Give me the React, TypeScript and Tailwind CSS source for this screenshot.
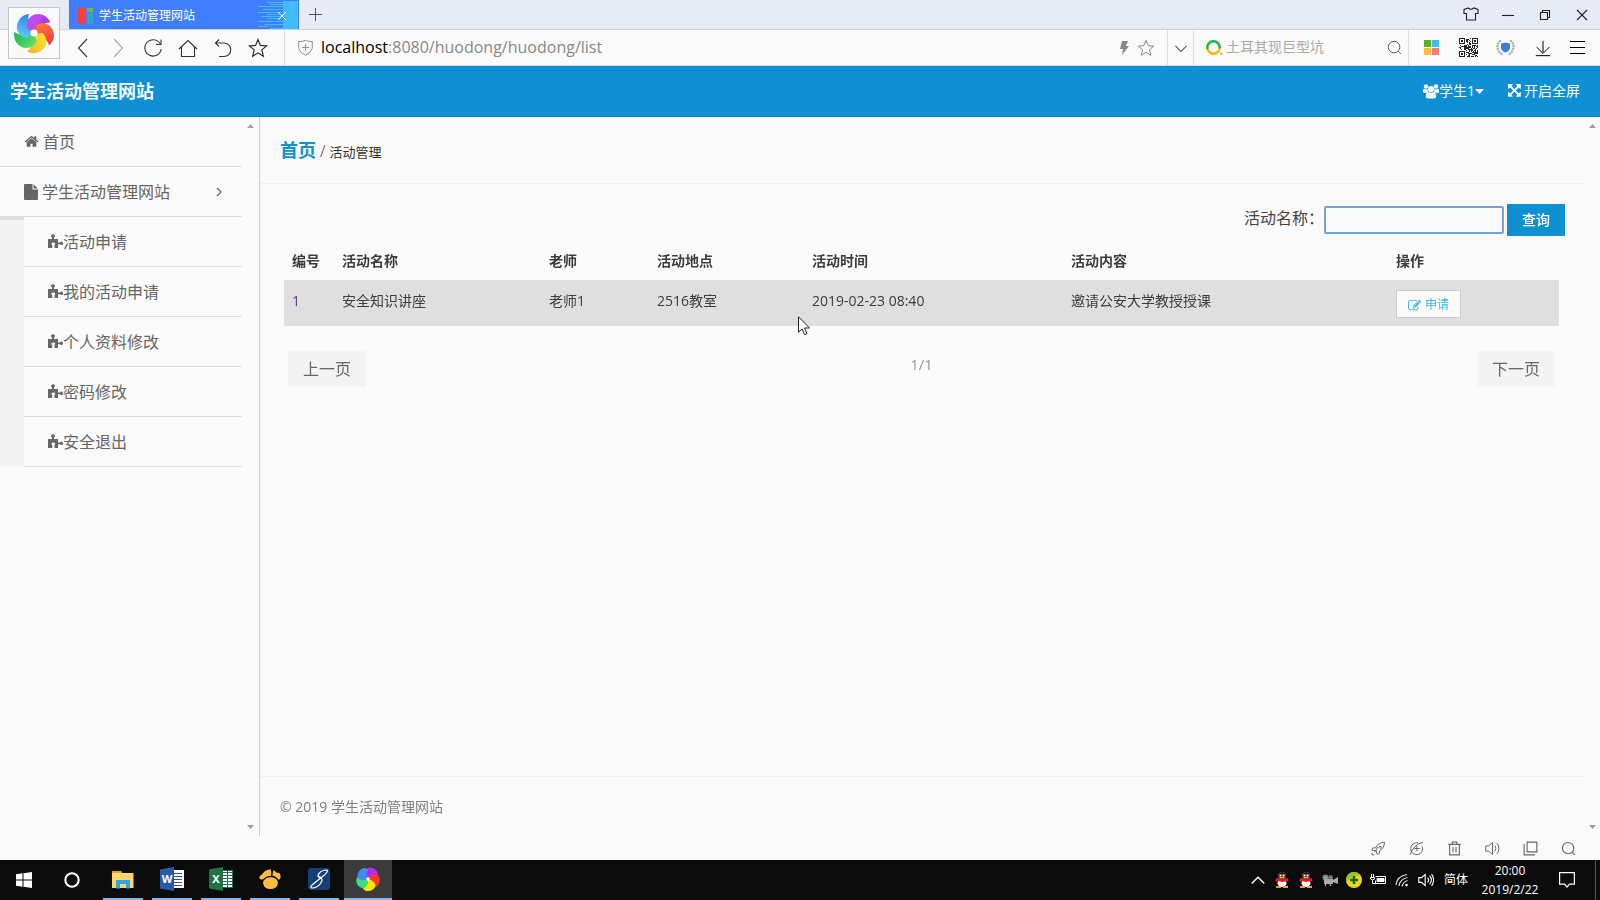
import { useState } from 'react'
import type { ReactNode } from 'react'

type IconProps = { className?: string }

const PATHS = {
  home: 'M1472 992v480q0 26-19 45t-45 19h-384v-384h-256v384h-384q-26 0-45-19t-19-45v-480q0-1 .5-3t.5-3l575-474 575 474q1 2 1 6zm223-69l-62 74q-8 9-21 11h-3q-13 0-21-7l-692-577-692 577q-12 8-24 7-13-2-21-11l-62-74q-8-10-7-23.5t11-21.5l719-599q32-26 76-26t76 26l244 204v-195q0-14 9-23t23-9h192q14 0 23 9t9 23v408l219 182q10 8 11 21.5t-7 23.5z',
  expand: 'M1283 413l-355 355 355 355 144-144q29-31 70-14 39 17 39 59v448q0 26-19 45t-45 19h-448q-42 0-59-40-17-39 14-69l144-144-355-355-355 355 144 144q31 30 14 69-17 40-59 40h-448q-26 0-45-19t-19-45v-448q0-42 40-59 39-17 69 14l144 144 355-355-355-355-144 144q-19 19-45 19-12 0-24-5-40-17-40-59v-448q0-26 19-45t45-19h448q42 0 59 40 17 39-14 69l-144 144 355 355 355-355-144-144q-31-30-14-69 17-40 59-40h448q26 0 45 19t19 45v448q0 42-39 59-13 5-25 5-26 0-45-19z',
  edit: 'M888 1184l116-116-152-152-116 116v56h96v96h56zm440-720q-16-16-33 1l-350 350q-17 17-1 33t33-1l350-350q17-17 1-33zm80 594v190q0 119-84.5 203.5t-203.5 84.5h-832q-119 0-203.5-84.5t-84.5-203.5v-832q0-119 84.5-203.5t203.5-84.5h832q63 0 117 25 15 7 18 23 3 17-9 29l-49 49q-14 14-32 8-23-6-45-6h-832q-66 0-113 47t-47 113v832q0 66 47 113t113 47h832q66 0 113-47t47-113v-126q0-13 9-22l64-64q15-15 35-7t20 29zm-96-738l288 288-672 672h-288v-288zm444 132l-92 92-288-288 92-92q28-28 68-28t68 28l152 152q28 28 28 68t-28 68z',
}

function Glyph({ name, className }: { name: keyof typeof PATHS; className?: string }) {
  return (
    <svg viewBox="0 0 1792 1792" fill="currentColor" className={className} aria-hidden="true">
      <path d={PATHS[name]} />
    </svg>
  )
}

function Line({ children, size = 20, className = '' }: { children: ReactNode; size?: number; className?: string }) {
  return (
    <svg
      width={size}
      height={size}
      viewBox="0 0 20 20"
      fill="none"
      stroke="currentColor"
      strokeWidth="1.1"
      className={className}
      aria-hidden="true"
    >
      {children}
    </svg>
  )
}

function PuzzleIcon({ className }: IconProps) {
  return (
    <svg viewBox="0 0 15 15" fill="currentColor" className={className} aria-hidden="true">
      <path d="M0 5h4V3.500Q3 2.900 3 1.800Q3 .3 5 .3T7 1.800Q7 2.900 6 3.500V5h4v3.500h2q.5-1 1.500-1Q15 7.500 15 9.400T13.500 11q-1 0-1.500-.7h-2V14H6.500v-3q.7-.5.700-1.200Q7.200 8.500 5.300 8.500T3.400 9.800q0 .7.800 1.200v3H0z" />
    </svg>
  )
}

function UsersIcon({ className }: IconProps) {
  return (
    <svg viewBox="0 0 16 15" fill="currentColor" className={className} aria-hidden="true">
      <circle cx="3" cy="2.500" r="2.200" />
      <circle cx="13" cy="2.500" r="2.200" />
      <path d="M0 5.500Q1 4.500 2.500 5.300L5 5.500v2L3 9H1.500Q0 9 0 7.500zM16 5.500q-1-1-2.500-.2L11 5.500v2L13 9h1.500Q16 9 16 7.500z" />
      <circle cx="8" cy="5" r="3.100" />
      <path d="M5 7.800Q8 9.500 11 7.800Q13.200 8.500 13.200 12.500Q13.200 14.500 11 14.500H5Q2.800 14.500 2.800 12.500Q2.800 8.500 5 7.800z" />
    </svg>
  )
}

// five-petal swirl used by the browser logo
const PETALS = [
  ['purple', '#c94ff3', '#a935ea'],
  ['red', '#fb7a3c', '#fb3340'],
  ['yellow', '#fbe32f', '#f9b32c'],
  ['green', '#5fe070', '#17b750'],
  ['blue', '#63c4fb', '#2b86ea'],
] as const

function SwirlLogo() {
  return (
    <svg width="42" height="42" viewBox="-21 -21 42 42" aria-hidden="true">
      <defs>
        {PETALS.map(([id, from, to]) => (
          <linearGradient key={id} id={`petal-${id}`}>
            <stop offset="0" stopColor={from} />
            <stop offset="1" stopColor={to} />
          </linearGradient>
        ))}
      </defs>
      {PETALS.map(([id], i) => (
        <path
          key={id}
          d="M-1-2.500Q-5-3-7-5Q-8-12-3-16.500Q2-20 9-18Q14-16 16.500-10.500Q13-11 10-9Q5-6 2-1z"
          fill={`url(#petal-${id})`}
          transform={`rotate(${i * 72})`}
        />
      ))}
      {/* the first petal has to sit on top of the last one */}
      <path d="M-1-2.500Q-5-3-7-5Q-8-12-3-16.500Q2-20 9-18L3-8Q1-5 0-2z" fill="#c24af1" />
      <circle r="3.600" fill="#fff" />
    </svg>
  )
}

function PinwheelIcon() {
  const colors = ['#b22df0', '#f5382c', '#fbe509', '#3ddc84', '#3f8cf0']
  return (
    <svg width="24" height="24" viewBox="-12 -12 24 24" aria-hidden="true">
      {colors.map((color, i) => (
        <path
          key={color}
          d="M0 0Q-4-4-2.500-9.500Q3-14 9-8Q10.500-5 9-2.500Q4-5 0 0z"
          fill={color}
          transform={`rotate(${i * 72})`}
        />
      ))}
      <circle r="1.800" fill="#fff" />
    </svg>
  )
}

function QrIcon() {
  const cells: ReactNode[] = []
  let seed = 77
  for (let y = 0; y < 19; y++) {
    for (let x = 0; x < 19; x++) {
      seed = (seed * 1103515 + 12345) % 65521
      const finder = (x < 7 && y < 7) || (x > 11 && y < 7) || (x < 7 && y > 11)
      if (!finder && seed % 100 < 52) {
        cells.push(<rect key={`${x}-${y}`} x={x} y={y} width="1" height="1" />)
      }
    }
  }
  return (
    <svg width="19" height="19" viewBox="0 0 19 19" fill="#222" shapeRendering="crispEdges" aria-hidden="true">
      {cells}
      {[[0, 0], [13, 0], [0, 13]].map(([x, y]) => (
        <path key={`${x}-${y}`} fillRule="evenodd" d={`M${x} ${y}h6v6h-6zM${x + 1} ${y + 1}v4h4v-4zM${x + 2} ${y + 2}h2v2h-2z`} />
      ))}
    </svg>
  )
}

function StarShape() {
  return <path d="M10 1.500l2.400 5.900 6.200.5-4.800 4 1.600 6.300L10 14.800l-5.400 3.400 1.600-6.300-4.800-4 6.200-.5z" />
}

function SearchShape() {
  return (
    <>
      <circle cx="9.500" cy="9.500" r="6.800" />
      <path d="M14.500 14.500l3 3" />
    </>
  )
}

function TabStrip() {
  return (
    <div className="flex h-[30px] items-stretch border-b border-[#cfd2da] bg-[#e7ebf5] pl-[69px]">
      <div className="relative flex w-[230px] items-center bg-[#3f7efe] pt-0.5 pl-2 text-xs text-white">
        <svg width="16" height="16" viewBox="0 0 16 16" aria-hidden="true">
          <path d="M0 0h8v16H0z" fill="#fb3d40" />
          <path d="M10 0h6v4h-6z" fill="#6fba45" />
          <path d="M10 5h6v11h-6z" fill="#3a9fc4" />
        </svg>
        <span className="ml-1.5 flex-1">学生活动管理网站</span>
        <svg width="40" height="28" viewBox="0 0 40 28" className="absolute top-px right-px" aria-hidden="true">
          <path d="M25 0h15v28H25z" fill="#40bcfd" />
          <path
            d="M9 1.500h16M12 3.500h13M0 5.500h25M5 8.500h20M0 11.500h25M9 13.500h16M3 15.500h22M9 17.500h16M0 20.500h25M6 23.500h19M0 25.500h10M12 27.500h13"
            stroke="#40bcfd"
          />
        </svg>
        <button type="button" aria-label="关闭标签页" className="relative mr-2 p-1">
          <svg width="10" height="10" viewBox="0 0 10 10" stroke="#fff" aria-hidden="true">
            <path d="M1 1l8 8M9 1l-8 8" />
          </svg>
        </button>
      </div>
      <button type="button" aria-label="新标签页" className="w-8 pl-2.5 text-[#555]">
        <svg width="13" height="13" viewBox="0 0 13 13" stroke="currentColor" aria-hidden="true">
          <path d="M6.500 0v13M0 6.500h13" />
        </svg>
      </button>
      <div className="ml-auto flex text-[#222]">
        <WindowButton label="皮肤">
          <path d="M7 3L3 4.500v4h2.500V15h9V8.500H17v-4L13 3Q10 5.500 7 3z" />
        </WindowButton>
        <WindowButton label="最小化">
          <path d="M4 10.500h12" />
        </WindowButton>
        <WindowButton label="还原">
          <path d="M5.500 7.500h7v7h-7zM7.500 7.500v-2h7v7h-2" />
        </WindowButton>
        <WindowButton label="关闭">
          <path d="M5 5l10 10M15 5L5 15" />
        </WindowButton>
      </div>
    </div>
  )
}

function WindowButton({ label, children }: { label: string; children: ReactNode }) {
  return (
    <button type="button" aria-label={label} className="flex w-[37px] items-center justify-center">
      <Line>{children}</Line>
    </button>
  )
}

function ToolButton({ label, children, className = '' }: { label: string; children: ReactNode; className?: string }) {
  return (
    <button type="button" aria-label={label} className={`flex w-[35px] shrink-0 items-center justify-center ${className}`}>
      {children}
    </button>
  )
}

function Toolbar() {
  return (
    <div className="flex h-9 items-stretch border-b border-[#dcdcdc] bg-[#fafafa] text-[#333]">
      <div className="flex w-[285px] border-r border-[#dcdcdc] pl-[65px]">
        <ToolButton label="后退"><Line><path d="M14 1L5.500 10l8.500 9" /></Line></ToolButton>
        <ToolButton label="前进" className="text-[#aaa]"><Line><path d="M6 1l8.500 9L6 19" /></Line></ToolButton>
        <ToolButton label="刷新">
          <Line><path d="M17 5.500A8.200 8.200 0 1 0 18.200 11M18 1.500v5h-5" /></Line>
        </ToolButton>
        <ToolButton label="主页"><Line><path d="M1 11l9-8.500 9 8.500M3.500 9v9.500h13V9" /></Line></ToolButton>
        <ToolButton label="撤销"><Line><path d="M6 1.500L2.500 5 6 8.500M2.500 5H11a6.500 6.500 0 1 1 0 13.500H6" /></Line></ToolButton>
        <ToolButton label="收藏" className="text-[#222]"><Line><StarShape /></Line></ToolButton>
      </div>
      <div className="flex min-w-0 flex-1 items-center pl-3">
        <Line size={17} className="shrink-0 text-[#888]">
          <path d="M10 1.500Q14 3.500 18 3v8q-1 5-8 8-7-3-8-8V3q4 .5 8-1.500zM10 6v8M6 10h8" />
        </Line>
        <p className="ml-[7px] truncate pb-0.5 text-base text-[#888]">
          <span className="text-black">localhost</span>:8080/huodong/huodong/list
        </p>
        <div className="ml-auto flex items-center gap-1.5 pr-3 text-[#888]">
          <svg width="12" height="14" viewBox="0 0 12 14" fill="currentColor" aria-hidden="true">
            <path d="M3 0h6L7 5h3L3 14l1-6H1z" />
          </svg>
          <Line size={18}><StarShape /></Line>
        </div>
      </div>
      <button type="button" aria-label="展开地址" className="flex w-[27px] items-center justify-center border-x border-[#dcdcdc] text-[#555]">
        <Line size={14}><path d="M2 7l8 8 8-8" strokeWidth="1.500" /></Line>
      </button>
      <div className="flex w-[215px] items-center border-r border-[#dcdcdc] pr-[5px] pl-3">
        <svg width="17" height="16" viewBox="0 0 17 16" fill="none" strokeWidth="2.400" className="shrink-0" aria-hidden="true">
          <circle cx="7.500" cy="7.500" r="6.200" stroke="#fcb316" />
          <path d="M1.500 9A6.200 6.200 0 1 1 13.600 8.500" stroke="#19b955" />
          <circle cx="15.200" cy="13.800" r="1.200" fill="#fcb316" stroke="none" />
        </svg>
        <input
          type="text"
          aria-label="搜索"
          placeholder="土耳其现巨型坑"
          className="ml-[3px] min-w-0 flex-1 bg-transparent pb-0.5 text-sm outline-none placeholder:text-[#aaa]"
        />
        <Line size={17} className="shrink-0 text-[#555]"><SearchShape /></Line>
      </div>
      <div className="flex pr-[7px] pl-[5px]">
        <ToolButton label="应用" className="mr-0.5">
          <svg width="15" height="15" viewBox="0 0 15 15" aria-hidden="true">
            <path d="M0 0h7v7H0z" fill="#5bb321" />
            <path d="M8 0h7v7H8z" fill="#41bdfb" />
            <path d="M0 8h7v7H0z" fill="#fdbc40" />
            <path d="M8 8h7v7H8z" fill="#fb7c7a" />
          </svg>
        </ToolButton>
        <ToolButton label="二维码" className="mr-0.5"><QrIcon /></ToolButton>
        <ToolButton label="安全中心" className="mr-0.5">
          <svg width="19" height="18" viewBox="0 0 19 18" fill="none" aria-hidden="true">
            <path d="M5 1.500Q1 4 1.500 8.500T7 16M14 1.500Q18 4 17.500 8.500T12 16" stroke="#a9b3b3" strokeWidth="2.400" strokeDasharray="2.200 .7" />
            <path d="M9.500 3.500l4.500 1v4q0 3.500-4.500 5-4.500-1.500-4.500-5v-4z" fill="#3c80d2" />
          </svg>
        </ToolButton>
        <ToolButton label="下载" className="mr-px text-black"><Line size={18}><path d="M10 2v13M3 9l7 7 7-7M2 18.500h16" /></Line></ToolButton>
        <button type="button" aria-label="菜单" className="flex w-8 items-center justify-center text-black">
          <svg width="15" height="14" viewBox="0 0 15 14" stroke="currentColor" aria-hidden="true">
            <path d="M0 .5h15M0 6.500h15M0 12.500h15" />
          </svg>
        </button>
      </div>
    </div>
  )
}

function ScrollArrows({ className = '' }: IconProps) {
  return (
    <div className={`flex shrink-0 flex-col items-center justify-between pt-[7px] pb-[7px] text-[#a0a0a0] ${className}`}>
      <svg width="7" height="4" viewBox="0 0 7 4" fill="currentColor" aria-hidden="true"><path d="M0 4L3.500 0 7 4z" /></svg>
      <svg width="7" height="4" viewBox="0 0 7 4" fill="currentColor" aria-hidden="true"><path d="M0 0h7L3.500 4z" /></svg>
    </div>
  )
}

const subMenu = ['活动申请', '我的活动申请', '个人资料修改', '密码修改', '安全退出']

function Sidebar() {
  return (
    <aside className="flex w-[260px] shrink-0 border-r border-[#ccc] text-base text-[#666]">
      <nav className="flex-1">
        <a href="#home" className="flex h-[50px] items-center border-b border-[#dedede] pl-6">
          <Glyph name="home" className="mr-1 h-[15px] w-[15px]" />
          首页
        </a>
        <a href="#menu" className="flex h-[50px] items-center border-b border-[#dedede] pr-5 pl-6">
          <svg viewBox="0 0 14 16" fill="currentColor" className="mr-1 h-4 w-3.5" aria-hidden="true">
            <path d="M0 1q0-1 1-1h7.500v5.500H14V15q0 1-1 1H1q-1 0-1-1zM9.500.300L13.800 4.500H9.500z" />
          </svg>
          学生活动管理网站
          <svg width="6" height="10" viewBox="0 0 6 10" fill="none" stroke="currentColor" strokeWidth="1.300" className="ml-auto" aria-hidden="true">
            <path d="M1 1l4 4-4 4" />
          </svg>
        </a>
        <div className="flex">
          <div className="w-6 border-t-[3px] border-[#dedede] bg-[#f3f3f3]" />
          <ul className="flex-1">
            {subMenu.map((label) => (
              <li key={label}>
                <a href="#sub" className="flex h-[50px] items-center border-b border-[#dedede] pl-6">
                  <PuzzleIcon className="h-[15px] w-[15px]" />
                  {label}
                </a>
              </li>
            ))}
          </ul>
        </div>
      </nav>
      <ScrollArrows className="w-[17px]" />
    </aside>
  )
}

const rows = [
  {
    id: 1,
    name: '安全知识讲座',
    teacher: '老师1',
    place: '2516教室',
    time: '2019-02-23 08:40',
    content: '邀请公安大学教授授课',
  },
]

function Content() {
  const [keyword, setKeyword] = useState('')

  return (
    <main className="flex min-w-0 flex-1">
      <div className="flex min-w-0 flex-1 flex-col">
        <div className="flex h-[67px] items-baseline border-b border-[#f0f0f0] pt-[19px] pl-5 text-[13px] text-[#333]">
          <a href="#home" className="text-lg font-bold text-[#0e90d2]">首页</a>
          <span className="mx-1 text-base font-light">/</span>
          <span>活动管理</span>
        </div>

        <form className="flex items-center justify-end pt-5 pr-[19px]" onSubmit={(e) => e.preventDefault()}>
          <label htmlFor="keyword" className="pb-1 text-base text-[#444]">活动名称：</label>
          <input
            id="keyword"
            type="text"
            autoFocus
            value={keyword}
            onChange={(e) => setKeyword(e.target.value)}
            className="mr-[3px] h-7 w-[180px] rounded-xs border-2 border-[#74a0e6] px-px text-base outline-none"
          />
          <button type="submit" className="h-8 w-[58px] bg-[#0e90d2] text-sm font-medium text-white">查询</button>
        </form>

        <div className="pr-[25px] pl-6">
          <table className="mt-1.5 w-full table-fixed text-left text-sm text-[#3c3c3c]">
            <thead>
              <tr className="h-[38px]">
                <th className="w-[50px] px-2">编号</th>
                <th className="w-[207px] px-2">活动名称</th>
                <th className="w-[108px] px-2">老师</th>
                <th className="w-[155px] px-2">活动地点</th>
                <th className="w-[259px] px-2">活动时间</th>
                <th className="w-[325px] px-2">活动内容</th>
                <th className="px-2">操作</th>
              </tr>
            </thead>
            <tbody>
              {rows.map((row) => (
                <tr key={row.id} className="h-[46px] bg-[#dfdfdf] align-top leading-[22px] [&>td]:px-2 [&>td]:pt-2.5">
                  <td className="text-[#5a3a8a]">{row.id}</td>
                  <td>{row.name}</td>
                  <td>{row.teacher}</td>
                  <td>{row.place}</td>
                  <td>{row.time}</td>
                  <td>{row.content}</td>
                  <td>
                    <button type="button" className="flex h-7 w-[65px] items-center justify-center gap-1 border border-[#ccc] bg-[#fafafa] pt-0.5 text-xs text-[#3bb4f2]">
                      <Glyph name="edit" className="h-[13px] w-[13px]" />
                      申请
                    </button>
                  </td>
                </tr>
              ))}
            </tbody>
          </table>

          <div className="flex items-start justify-between pt-[25px] pr-1 pl-1 text-base text-[#666]">
            <a href="#prev" className="flex h-9 w-[78px] items-center justify-center bg-[#f3f3f3]">上一页</a>
            <span className="pt-0.5 text-[15px] text-[#999]">1/1</span>
            <a href="#next" className="flex h-9 w-[78px] items-center justify-center bg-[#f3f3f3]">下一页</a>
          </div>
        </div>

        <footer className="mt-auto flex h-[60px] items-center border-t border-[#f0f0f0] pl-5 text-sm text-[#808080]">
          © 2019 学生活动管理网站
        </footer>
      </div>
      <ScrollArrows className="w-4" />
    </main>
  )
}

function StatusBar() {
  return (
    <div className="flex h-6 items-center justify-end pr-[13px] text-[#666] [&>button]:flex [&>button]:w-[38px] [&>button]:justify-center">
      <button type="button" aria-label="加速">
        <Line size={15}><path d="M18 1.500Q10 2 6 9l-4 .5-.5 3L7 13l1 4.500 3-.5.500-4Q18 9 18 1.500zM12 6.500l2 2-2 1.500-1.500-1.500zM1.500 15.500v3h3M9 8l-4 7" strokeWidth="1.300" /></Line>
      </button>
      <button type="button" aria-label="兼容模式">
        <Line size={15}><path d="M17.500 7a8 8 0 1 1-5.500-4.500M1.500 18Q6 5 18.500 1.500M10.500 6.500v7M7 10h7" strokeWidth="1.300" /></Line>
      </button>
      <button type="button" aria-label="清理">
        <Line size={15}><path d="M1.500 4.500h17M7 4V1.500h6V4M3.500 5v13.500h13V5M8 8v7M12 8v7" strokeWidth="1.500" /></Line>
      </button>
      <button type="button" aria-label="声音">
        <Line size={15}><path d="M1 6.500h4L10 2v16l-5-4.500H1zM13 6q3 4 0 8M16 3q5 7 0 14" strokeWidth="1.300" /></Line>
      </button>
      <button type="button" aria-label="窗口">
        <Line size={15}><path d="M5.500 1.500h13v13h-13zM1.500 4v14.500H16" strokeWidth="1.500" /></Line>
      </button>
      <button type="button" aria-label="缩放">
        <Line size={15}><circle cx="9.500" cy="9.500" r="7.500" strokeWidth="1.500" /><path d="M15 15l3.500 3.500" strokeWidth="1.500" /></Line>
      </button>
    </div>
  )
}

function TaskButton({ label, active = false, children }: { label: string; active?: boolean; children: ReactNode }) {
  return (
    <button
      type="button"
      aria-label={label}
      className={`ml-px flex w-12 flex-col items-center ${active ? 'bg-[#3b3b3b]' : ''}`}
    >
      <span className="flex flex-1 items-center">{children}</span>
      <span className={`h-0.5 bg-[#76b9ed] ${active ? 'w-full' : 'w-10'}`} />
    </button>
  )
}

function OfficeIcon({ color, light, letter, sheet = false }: { color: string; light: string; letter: string; sheet?: boolean }) {
  return (
    <svg width="24" height="24" viewBox="0 0 24 24" aria-hidden="true">
      <path d="M13 3h11v18H13z" fill="#fff" />
      {sheet ? (
        <path d="M14 5.500h9M14 8.500h9M14 11.500h9M14 14.500h9M14 17.500h9M18.500 4v16M23.500 3v18M13 3.500h11M13 20.500h11" stroke={color} />
      ) : (
        <path d="M14 6.500h8M14 9.500h8M14 12.500h8M14 15.500h8M14 18.500h8" stroke={color} />
      )}
      <path d="M0 2.500L14 0v24L0 21.500z" fill={light} />
      <text x="7" y="16" textAnchor="middle" fill="#fff" fontSize="11" fontWeight="700">{letter}</text>
    </svg>
  )
}

function Penguin() {
  return (
    <svg width="14" height="16" viewBox="0 0 14 16" aria-hidden="true">
      <ellipse cx="7" cy="4" rx="4" ry="4" fill="#1a1412" stroke="#665" strokeWidth=".5" />
      <path d="M4.500 2.500h2v2h-2zM7.500 2.500h2v2h-2z" fill="#fff" />
      <path d="M4 5h6l-1 1.500H5z" fill="#f6b51e" />
      <ellipse cx="7" cy="11" rx="4.500" ry="4" fill="#fff" />
      <path d="M1 6l2 .5h8l2-.5.500 4-2-1-4 1-5-1-2 1.500z" fill="#e5152b" />
      <path d="M1 14h5v2H1zM8 14h5v2H8z" fill="#f6a11e" />
    </svg>
  )
}

function Taskbar() {
  return (
    <div className="flex h-10 items-stretch bg-[#0b0b0b] text-xs text-white">
      <button type="button" aria-label="开始" className="flex w-12 items-center justify-center">
        <svg width="16" height="16" viewBox="0 0 16 16" fill="#fff" aria-hidden="true">
          <path d="M0 2.200L6.500 1.300v6.200H0zM7.500 1.200L16 0v7.500H7.500zM0 8.500h6.500v6.200L0 13.800zM7.500 8.500H16V16l-8.500-1.200z" />
        </svg>
      </button>
      <button type="button" aria-label="Cortana" className="mr-0.5 flex w-12 items-center justify-center">
        <svg width="16" height="16" viewBox="0 0 16 16" fill="none" stroke="#fff" strokeWidth="2" aria-hidden="true">
          <circle cx="8" cy="8" r="6.700" />
        </svg>
      </button>
      <TaskButton label="文件资源管理器">
        <svg width="22" height="19" viewBox="0 0 22 19" aria-hidden="true">
          <path d="M0 1h9l1 2h11.500v15H0z" fill="#fcd66b" />
          <path d="M0 1h9l1 2H0z" fill="#e6a919" />
          <path d="M4 10h14v8.500h-4V14H8v4.500H4z" fill="#2ba7e6" />
          <path d="M8 14h6v4H8z" fill="#fcd66b" />
        </svg>
      </TaskButton>
      <TaskButton label="Word"><OfficeIcon color="#2b579a" light="#2b5ba5" letter="W" /></TaskButton>
      <TaskButton label="Excel"><OfficeIcon color="#217346" light="#217346" letter="X" sheet /></TaskButton>
      <TaskButton label="Navicat">
        <svg width="22" height="20" viewBox="0 0 22 20" fill="#fbbd3e" aria-hidden="true">
          <path d="M.5 9.500Q0 6.500 3 5.500Q6 .5 11.500.3Q13 3 12 7Q8 6.500 4.500 10Q2 11 .5 9.500zM14.500 1Q18 4 18.500 4Q21 3 21.500 6.500Q22 10 19.500 11Q17 7.500 13.500 7Q13.500 4 14.500 1z" />
          <path d="M11 8Q18.500 8.500 19 14Q18 20 11.500 20T4 14Q4.500 8.500 11 8z" />
          <path d="M3.500 11.500Q8 7 13 7.300T19.500 12" fill="none" stroke="#0b0b0b" />
        </svg>
      </TaskButton>
      <TaskButton label="MyEclipse">
        <svg width="23" height="22" viewBox="0 0 23 22" fill="none" aria-hidden="true">
          <rect width="22" height="22" rx="3" fill="#163f78" />
          <path d="M14 11Q8 9 11 5.500T19 2Q21 3.500 14 9T3 18Q2 21 7 19.500T14 12.500Q14 9 10 8" stroke="#fff" strokeWidth="1.200" />
        </svg>
      </TaskButton>
      <TaskButton label="浏览器" active><PinwheelIcon /></TaskButton>

      <div className="ml-auto flex items-center [&>span]:flex [&>span]:w-6 [&>span]:justify-center">
        <span><Line size={14}><path d="M1 15l9-9 9 9" strokeWidth="2" /></Line></span>
        <span><Penguin /></span>
        <span><Penguin /></span>
        <span>
          <svg width="16" height="12" viewBox="0 0 16 12" aria-hidden="true">
            <circle cx="3.500" cy="3.500" r="3" fill="#888" />
            <circle cx="8.500" cy="3.500" r="2.500" fill="#666" />
            <path d="M2 5h9v5H2zM11 6l5-3v7l-5-2z" fill="#aaa" />
            <path d="M4 10l-1 2M8 10l1 2M3.500 3.500h1M8.500 3.500h1" stroke="#ddd" />
          </svg>
        </span>
        <span>
          <svg width="16" height="16" viewBox="0 0 16 16" aria-hidden="true">
            <circle cx="8" cy="8" r="8" fill="#f5d31c" />
            <path d="M8 0a8 8 0 0 0-7.500 10.500Q3 3.500 14 3Q12 0 8 0z" fill="#8fc62c" />
            <path d="M8 4v8M4 8h8" stroke="#15691f" strokeWidth="2.500" />
          </svg>
        </span>
        <span>
          <svg width="16" height="12" viewBox="0 0 16 12" fill="none" stroke="#fff" aria-hidden="true">
            <path d="M5.500 2.500h10v7h-10v-3M1.500 0v3M3.500 0v3M.5 3.500h4M.5 3.500v1.500l2 1 2-1v-1.500M2.500 6v3.500h3" />
            <path d="M7 4.500h7v3H7z" fill="#fff" />
          </svg>
        </span>
        <span>
          <svg width="14" height="14" viewBox="0 0 14 14" fill="none" stroke="#ddd" aria-hidden="true">
            <path d="M1 12Q2 3 12 1.500M4 13Q5 6 12.500 4.500M7 13.500Q8 9 12.500 7.500" strokeWidth="1.200" />
            <circle cx="11.500" cy="12" r="1.300" fill="#fff" stroke="none" />
          </svg>
        </span>
        <span><Line size={16}><path d="M1 7h3.500L9 3v14l-4.500-4H1zM12 7q2.500 3 0 6M14.500 4.500q4.500 5.500 0 11M17 2.500q5 7.500 0 15" strokeWidth="1.400" /></Line></span>
      </div>
      <button type="button" className="ml-1.5">简体</button>
      <time dateTime="2019-02-22T20:00" className="ml-2 flex w-[68px] flex-col justify-center text-center leading-[19px]">
        20:00
        <span>2019/2/22</span>
      </time>
      <button type="button" aria-label="通知" className="ml-[5px] flex w-9 items-center justify-center">
        <svg width="16" height="16" viewBox="0 0 16 16" fill="none" stroke="#fff" strokeWidth="1.200" aria-hidden="true">
          <path d="M.6.600h14.800v11.500H10.500L8 15l-2.500-2.900H.6z" />
        </svg>
      </button>
      <div className="ml-2.5 w-[5px] border-l border-[#555]" />
    </div>
  )
}

export default function App() {
  return (
    <div className="relative flex h-screen flex-col overflow-hidden bg-[#fafafa] font-['Open_Sans','Noto_Sans_CJK_SC',sans-serif]">
      <TabStrip />
      <Toolbar />
      <div className="absolute top-[7px] left-2 flex h-[52px] w-[52px] items-center justify-center border border-[#c6c6c6] bg-[#fafafa]">
        <SwirlLogo />
      </div>

      <header className="flex h-[51px] shrink-0 items-center justify-between border-b border-[#0c80ba] bg-[#0e90d2] pr-5 pl-2.5 text-sm text-[#f4f8fb]">
        <h1 className="text-lg font-bold">学生活动管理网站</h1>
        <div className="flex items-center gap-6">
          <button type="button" className="flex items-center">
            <UsersIcon className="h-[15px] w-4" />
            学生1
            <svg width="9" height="5" viewBox="0 0 9 5" fill="currentColor" aria-hidden="true"><path d="M0 0h9L4.500 5z" /></svg>
          </button>
          <button type="button" className="flex items-center">
            <Glyph name="expand" className="mr-px h-[15px] w-[15px]" />
            开启全屏
          </button>
        </div>
      </header>

      <div className="flex min-h-0 flex-1">
        <Sidebar />
        <Content />
      </div>

      <StatusBar />
      <Taskbar />

      <svg width="13" height="20" viewBox="0 0 13 20" className="absolute top-[316px] left-[798px]" aria-hidden="true">
        <path d="M.5.800v15.500l3.600-3.400 2.500 5.700 2.400-1-2.500-5.600h5z" fill="#fff" stroke="#222" />
      </svg>
    </div>
  )
}
